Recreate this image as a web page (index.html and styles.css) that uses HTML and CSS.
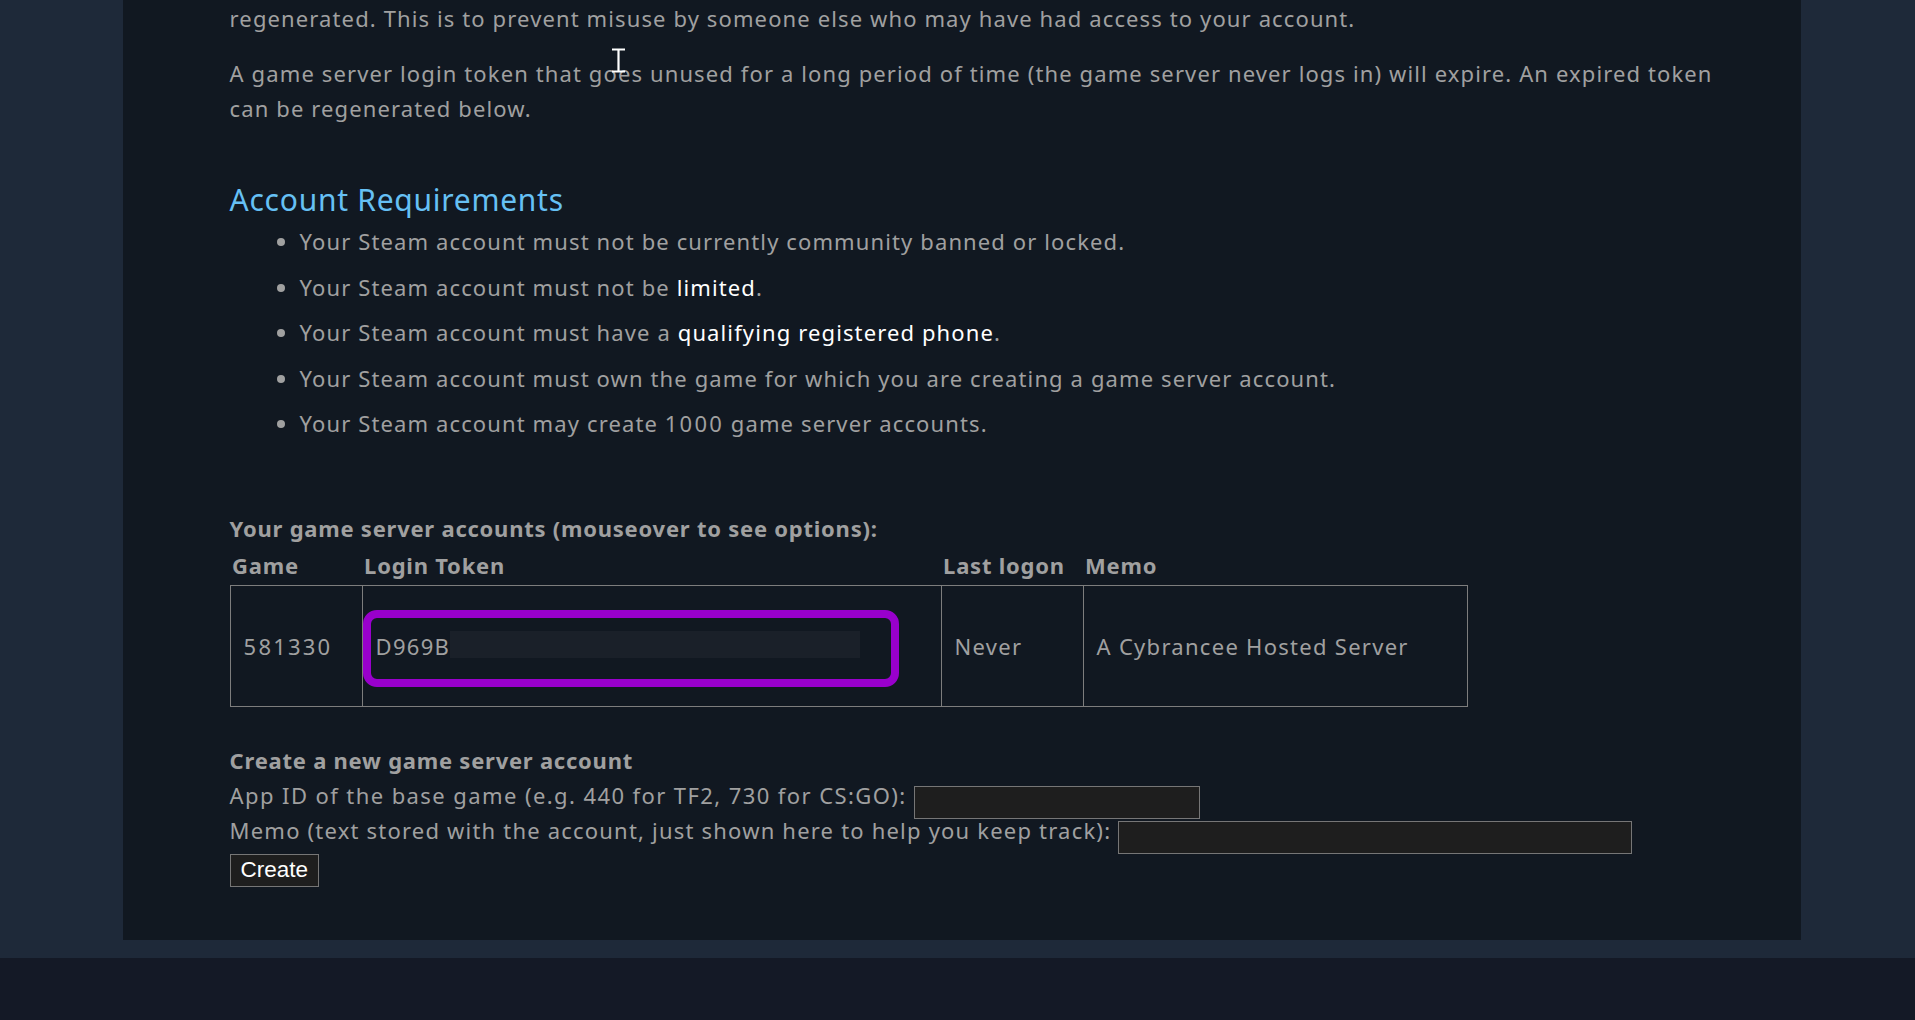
FILE: index.html
```html
<!DOCTYPE html>
<html lang="en">
<head>
    <meta charset="UTF-8">
    <meta name="viewport" content="width=device-width, initial-scale=1.0">
    <title>Steam Game Server Account Management</title>
    <link rel="stylesheet" href="styles.css">
</head>
<body>
    <div class="page">
        <div class="panel">
            <p>regenerated. This is to prevent misuse by someone else who may have had access to your account.</p>
            <p>A game server login token that goes unused for a long period of time (the game server never logs in) will expire. An expired token can be regenerated below.</p>

            <h2>Account Requirements</h2>
            <ul class="reqs">
                <li>Your Steam account must not be currently community banned or locked.</li>
                <li>Your Steam account must not be <a href="#">limited</a>.</li>
                <li>Your Steam account must have a <a href="#">qualifying registered phone</a>.</li>
                <li>Your Steam account must own the game for which you are creating a game server account.</li>
                <li>Your Steam account may create <span class="num">1000</span> game server accounts.</li>
            </ul>

            <div class="label">Your game server accounts (mouseover to see options):</div>
            <table class="accounts">
                <colgroup>
                    <col class="c-game"><col class="c-token"><col class="c-logon"><col class="c-memo">
                </colgroup>
                <tr>
                    <th>Game</th><th>Login Token</th><th>Last logon</th><th>Memo</th>
                </tr>
                <tr class="row">
                    <td class="num">581330</td>
                    <td class="token">D969B<span class="blur"></span><div class="mark"></div></td>
                    <td>Never</td>
                    <td>A Cybrancee Hosted Server</td>
                </tr>
            </table>

            <div class="label create-title">Create a new game server account</div>
            <div class="form-row">
                <span class="wide">App ID of the base game (e.g. 440 for TF2, 730 for CS:GO):</span>
                <input type="text" class="appid">
            </div>
            <div class="form-row">
                <span class="memo-label">Memo (text stored with the account, just shown here to help you keep track):</span>
                <input type="text" class="memo">
            </div>
            <button>Create</button>
        </div>
    </div>
    <div class="foot"></div>

    <svg class="cursor" width="16" height="26" viewBox="0 0 16 26">
        <path d="M1 1.5h13M7.5 1.5v22M1 23.5h13" stroke="#fff" stroke-width="2.2" fill="none"/>
    </svg>
</body>
</html>
```

FILE: styles.css
```css
body { margin: 0; background: #1e2939; font-family: "Noto Sans", "Open Sans", sans-serif; font-size: 22px; line-height: 35px; letter-spacing: 1.12px; color: #a0a0a0; }
.page { padding: 0 0 18px 123px; }
.panel { width: 1678px; box-sizing: border-box; padding: 1px 60px 53.6px 106.6px; background: #111821; }
.foot { height: 62px; background: #141926; }

p { margin: 0 0 20px; }
h2 { margin: 56px 0 0; font-size: 30px; line-height: 35px; letter-spacing: 0.73px; font-weight: normal; color: #66c0f4; }

.reqs { margin: 7.4px 0 0; padding-left: 70px; }
.reqs li { margin-bottom: 10.5px; }
.reqs a { color: #fff; text-decoration: none; }
.num { letter-spacing: 2.2px; }

.label { margin-top: 70px; font-weight: bold; letter-spacing: 0.76px; }

.accounts { border-collapse: collapse; table-layout: fixed; width: 1237px; }
.c-game { width: 132px; }
.c-token { width: 579px; }
.c-logon { width: 142px; }
.c-memo { width: 384px; }
.accounts th { padding: 2px; text-align: left; white-space: nowrap; letter-spacing: 0.76px; }
.accounts td { height: 94px; padding: 13px; border: 1px solid #7d7d7d; vertical-align: middle; white-space: nowrap; letter-spacing: 1.28px; }
.accounts td.num { letter-spacing: 2.2px; }
.token { position: relative; }
.blur { display: inline-block; width: 410px; height: 27px; vertical-align: -3px; background: #1a2029; }
.mark { position: absolute; left: 0; top: 24px; width: 536px; height: 77px; box-sizing: border-box; border: 8px solid #9900cc; border-radius: 14px; }

.create-title { margin-top: 35.4px; }
.form-row { display: flex; height: 35px; white-space: nowrap; }
.form-row .wide { letter-spacing: 1.41px; }
.form-row .memo-label { letter-spacing: 1.2px; }
.form-row input { margin: 8px 0 0 7px; height: 33px; box-sizing: border-box; padding: 0 3px; background: #1e1e1e; border: 1px solid #767676; color: #fff; }
.appid { width: 286px; }
.memo { width: 514px; }
button { display: block; margin-top: 6px; height: 33px; padding: 0 10px; background: #1e1e1e; border: 1px solid #767676; color: #fff; font-family: "Liberation Sans", Arial, sans-serif; font-size: 22.5px; letter-spacing: 0; }

.cursor { position: absolute; left: 611px; top: 48px; }
```
